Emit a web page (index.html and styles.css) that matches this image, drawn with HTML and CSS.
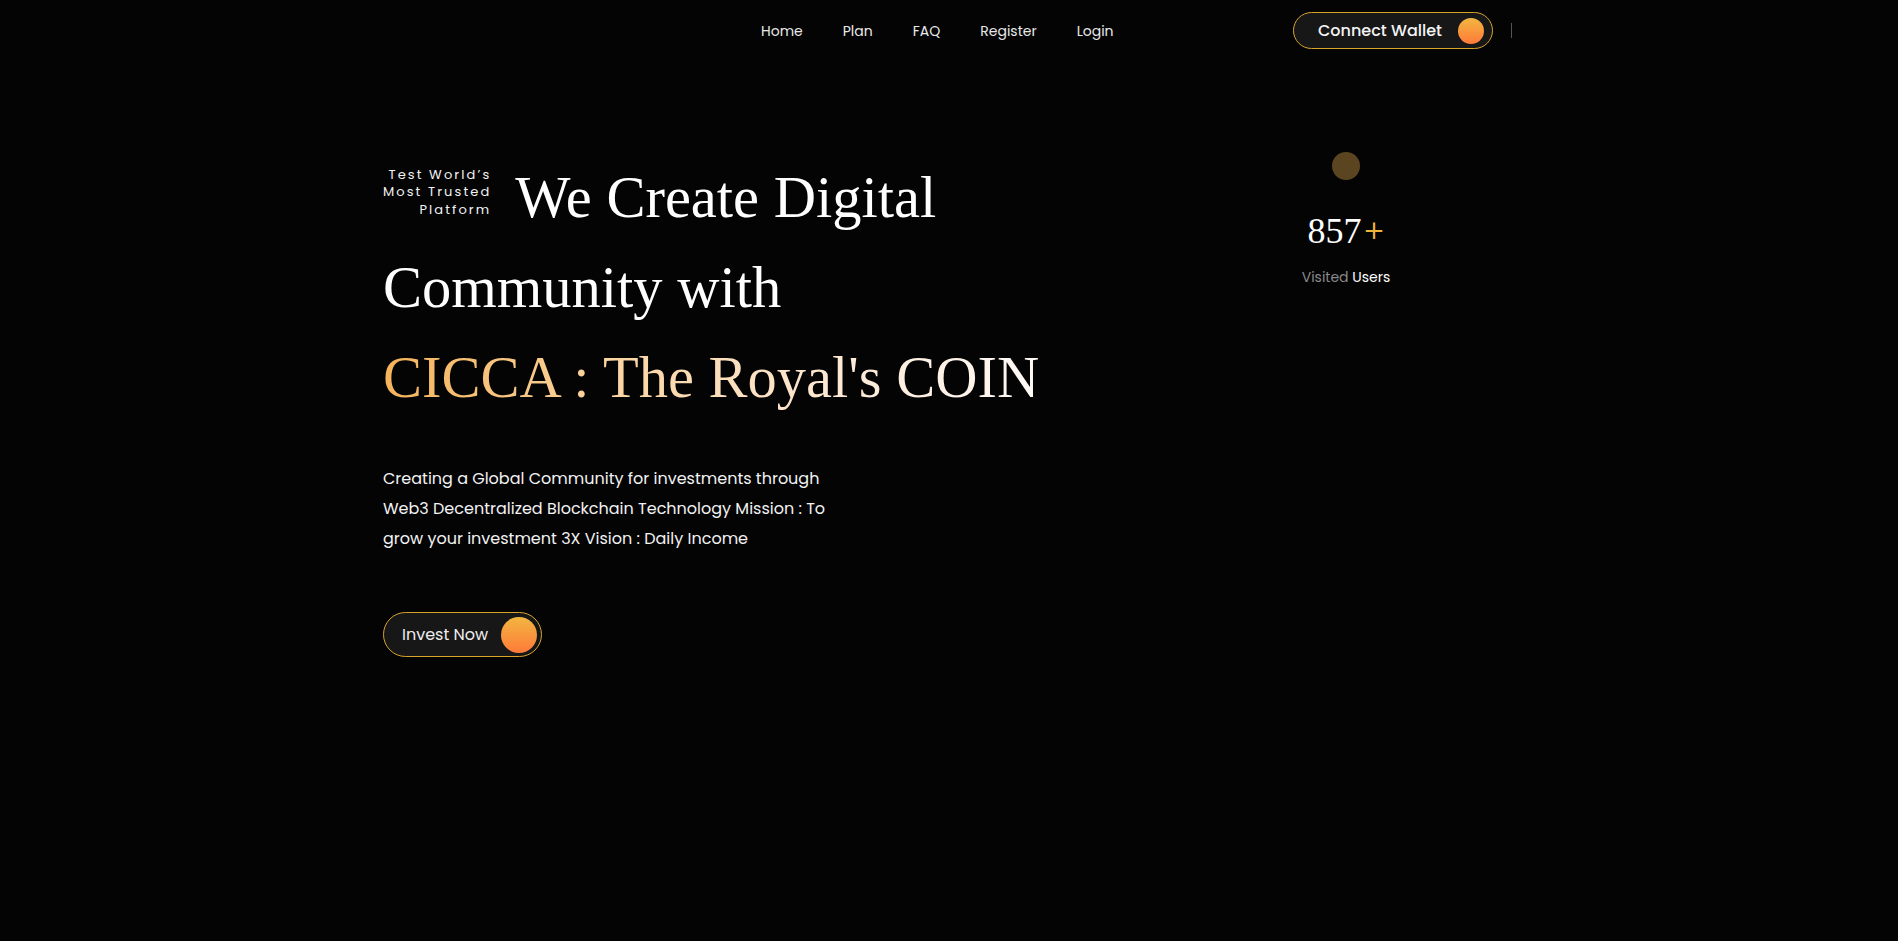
FILE: index.html
```html
<!DOCTYPE html>
<html lang="en">
<head>
<meta charset="utf-8">
<title>CICCA : The Royal's COIN</title>
<link rel="stylesheet" href="styles.css">
</head>
<body>
<header class="header">
  <div class="container header-inner">
    <nav class="nav">
      <a class="nav-link" href="#">Home</a>
      <a class="nav-link" href="#">Plan</a>
      <a class="nav-link" href="#">FAQ</a>
      <a class="nav-link" href="#">Register</a>
      <a class="nav-link" href="#">Login</a>
    </nav>
    <div class="header-actions">
      <a class="pill-btn wallet-btn" href="#"><span class="pill-label">Connect Wallet</span><span class="orb orb-sm"></span></a>
      <span class="divider"></span>
    </div>
  </div>
</header>

<main class="container hero">
  <section class="hero-main">
    <h1 class="hero-title">
      <span class="tagline">Test World’s<br>Most Trusted<br>Platform</span>We Create Digital<br>Community with<br><span class="gradient-text">CICCA : The Royal's COIN</span>
    </h1>
    <p class="hero-text">Creating a Global Community for investments through Web3 Decentralized Blockchain Technology Mission : To grow your investment 3X Vision : Daily Income</p>
    <a class="pill-btn invest-btn" href="#"><span class="pill-label">Invest Now</span><span class="orb orb-lg"></span></a>
  </section>
  <aside class="stats">
    <span class="stats-dot"></span>
    <div class="stats-number">857<span class="plus">+</span></div>
    <div class="stats-label"><span class="muted">Visited</span> Users</div>
  </aside>
</main>
</body>
</html>
```
FILE: styles.css
```css
* { box-sizing: border-box; }

html, body { margin: 0; padding: 0; }

body {
  background: #040405;
  color: #ffffff;
  font-family: "Poppins", "DejaVu Sans", sans-serif;
  min-height: 941px;
}

a { text-decoration: none; color: inherit; }

.container {
  width: 1132px;
  margin: 0 auto;
}

/* Header */
.header-inner {
  height: 61px;
  display: flex;
  align-items: center;
}

.nav {
  display: flex;
  margin-left: 358px;
}

.nav-link {
  padding: 0 20px;
  font-size: 14px;
  color: #e8e8e8;
  line-height: 20px;
}

.header-actions {
  margin-left: auto;
  display: flex;
  align-items: center;
  padding-right: 3px;
}

.pill-btn {
  display: flex;
  align-items: center;
  background: #171717;
  border: 1px solid #d8a42c;
  border-radius: 999px;
}

.wallet-btn {
  width: 200px;
  height: 37px;
  padding: 0 8px 0 24px;
  justify-content: space-between;
}

.wallet-btn .pill-label {
  font-size: 16px;
  font-weight: 500;
  color: #f4f4f4;
}

.orb {
  display: block;
  border-radius: 50%;
  background: linear-gradient(180deg, #f2b640 0%, #ff7a3a 100%);
}

.orb-sm { width: 26px; height: 26px; }
.orb-lg { width: 36px; height: 36px; }

.divider {
  width: 1px;
  height: 15px;
  background: #555;
  margin-left: 18px;
}

/* Hero */
.hero {
  display: grid;
  grid-template-columns: 1fr 180px;
  padding-right: 79px;
  padding-top: 92px;
}

.hero-title {
  margin: 0;
  font-family: "Liberation Serif", serif;
  font-weight: 400;
  font-size: 58.5px;
  line-height: 90px;
  color: #ffffff;
}

.tagline {
  display: inline-block;
  font-family: "Poppins", "DejaVu Sans", sans-serif;
  font-size: 13px;
  line-height: 17.5px;
  letter-spacing: 2.1px;
  text-align: right;
  margin-right: 24px;
  vertical-align: 3.5px;
  color: #f2f2f2;
}

.gradient-text {
  background: linear-gradient(90deg, #f5b35a 0%, #fbd5a2 35%, #fde6cf 65%, #fffaf7 100%);
  -webkit-background-clip: text;
  background-clip: text;
  color: transparent;
}

.hero-text {
  margin: 41px 0 0;
  max-width: 455px;
  font-size: 16px;
  line-height: 30px;
  color: #f2f2f2;
}

.invest-btn {
  margin-top: 58px;
  width: 159px;
  height: 45px;
  padding: 0 4px 0 18px;
  justify-content: space-between;
}

.invest-btn .pill-label {
  font-size: 16px;
  color: #ededed;
}

/* Stats */
.stats {
  display: flex;
  flex-direction: column;
  align-items: center;
  padding-top: 152px;
  margin-top: -153px;
}

.stats-dot {
  width: 28px;
  height: 28px;
  border-radius: 50%;
  background: #5b4520;
}

.stats-number {
  margin-top: 29px;
  font-family: "Liberation Serif", serif;
  font-size: 36px;
  line-height: 44px;
}

.plus {
  font-family: "Poppins", "DejaVu Sans", sans-serif;
  font-weight: 300;
  font-size: 32px;
  color: #f0b43c;
  margin-left: 2px;
}

.stats-label {
  margin-top: 13px;
  font-size: 14px;
  color: #ffffff;
}

.muted { color: #8a8a8a; }
```
